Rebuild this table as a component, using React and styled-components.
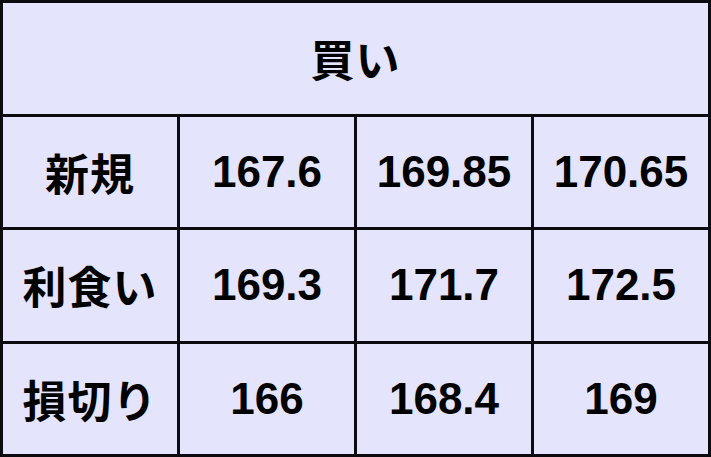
import React from "react";
import styled, { createGlobalStyle } from "styled-components";

const GlobalStyle = createGlobalStyle`
  html, body {
    margin: 0;
    padding: 0;
    background: #ffffff;
  }
`;

const rows = [
  { label: "新規", values: ["167.6", "169.85", "170.65"] },
  { label: "利食い", values: ["169.3", "171.7", "172.5"] },
  { label: "損切り", values: ["166", "168.4", "169"] },
];

const App = () => {
  return (
    <>
      <GlobalStyle />
      <Table>
        <HeaderCell>買い</HeaderCell>
        {rows.map((row) => (
          <React.Fragment key={row.label}>
            <Cell $label>{row.label}</Cell>
            {row.values.map((v, i) => (
              <Cell key={i}>{v}</Cell>
            ))}
          </React.Fragment>
        ))}
      </Table>
    </>
  );
};

const Table = styled.div`
  width: 711px;
  height: 457px;
  box-sizing: border-box;
  display: grid;
  grid-template-columns: repeat(4, 1fr);
  grid-template-rows: repeat(4, 1fr);
  gap: 3px;
  padding: 3px;
  background: #0c0c10;
`;

const Cell = styled.div`
  display: flex;
  align-items: center;
  justify-content: center;
  background: #e4e4fd;
  color: #000;
  font-family: "Liberation Sans", Arial, "Noto Sans CJK JP", sans-serif;
  font-weight: bold;
  font-size: 44px;
  letter-spacing: ${(p) => (p.$label ? "1px" : "0")};
`;

const HeaderCell = styled(Cell)`
  grid-column: 1 / -1;
  letter-spacing: 1px;
`;

export default App;
